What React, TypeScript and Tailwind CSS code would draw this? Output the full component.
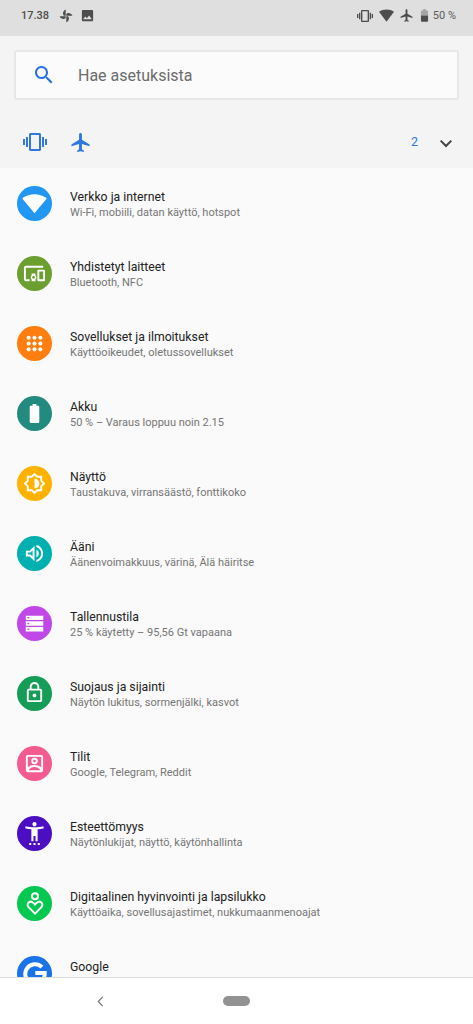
import type { ReactNode } from "react";

type IconProps = {
  className?: string;
  children: ReactNode;
};

type Setting = {
  title: string;
  summary?: string;
  color: string;
  icon: ReactNode;
};

function Icon({ className = "size-[21px]", children }: IconProps) {
  return (
    <svg viewBox="0 0 24 24" fill="currentColor" className={`block shrink-0 ${className}`}>
      {children}
    </svg>
  );
}

function VibrationIcon({ className }: { className: string }) {
  return (
    <Icon className={className}>
      <path d="M0 15h2V9H0v6zm3 2h2V7H3v10zm19-8v6h2V9h-2zm-3 8h2V7h-2v10zM16.5 3h-9C6.67 3 6 3.67 6 4.5v15c0 .83.67 1.5 1.5 1.5h9c.83 0 1.5-.67 1.5-1.5v-15c0-.83-.67-1.5-1.5-1.5zM16 19H8V5h8v14z" />
    </Icon>
  );
}

function FlightIcon({ className }: { className: string }) {
  return (
    <Icon className={className}>
      <path d="M21.5 16v-2l-8-5V3.5c0-.83-.67-1.5-1.5-1.5s-1.5.67-1.5 1.5V9l-8 5v2l8-2.5V19l-2 1.5V22l3.5-1 3.5 1v-1.5l-2-1.5v-5.5l8 2.5z" />
    </Icon>
  );
}

const settings: Setting[] = [
  {
    title: "Verkko ja internet",
    summary: "Wi-Fi, mobiili, datan käyttö, hotspot",
    color: "bg-[#2196f3]",
    icon: (
      <Icon className="size-[25px]">
        <path d="M12 21.4 L.6 7.6 Q.1 6.9.9 6.4 C7.5 1.9 16.5 1.9 23.1 6.4 Q23.9 6.9 23.4 7.6z" />
      </Icon>
    ),
  },
  {
    title: "Yhdistetyt laitteet",
    summary: "Bluetooth, NFC",
    color: "bg-[#6b9f2f]",
    icon: (
      <Icon className="size-[23px]">
        <path d="M3 6h18V4H3c-1.1 0-2 .9-2 2v12c0 1.1.9 2 2 2h4v-2H3V6zm10 6H9v1.78c-.61.55-1 1.33-1 2.22s.39 1.67 1 2.22V20h4v-1.78c.61-.55 1-1.34 1-2.22s-.39-1.67-1-2.22V12zm-2 5.5c-.83 0-1.5-.67-1.5-1.5s.67-1.5 1.5-1.5 1.5.67 1.5 1.5-.67 1.5-1.5 1.5zM22 8h-6c-.5 0-1 .5-1 1v10c0 .5.5 1 1 1h6c.5 0 1-.5 1-1V9c0-.5-.5-1-1-1zm-1 10h-4v-8h4v8z" />
      </Icon>
    ),
  },
  {
    title: "Sovellukset ja ilmoitukset",
    summary: "Käyttöoikeudet, oletussovellukset",
    color: "bg-[#ff7e0f]",
    icon: (
      <Icon>
        <circle cx="5.3" cy="5.3" r="2.3" />
        <circle cx="12" cy="5.3" r="2.3" />
        <circle cx="18.7" cy="5.3" r="2.3" />
        <circle cx="5.3" cy="12" r="2.3" />
        <circle cx="12" cy="12" r="2.3" />
        <circle cx="18.7" cy="12" r="2.3" />
        <circle cx="5.3" cy="18.7" r="2.3" />
        <circle cx="12" cy="18.7" r="2.3" />
        <circle cx="18.7" cy="18.7" r="2.3" />
      </Icon>
    ),
  },
  {
    title: "Akku",
    summary: "50 % – Varaus loppuu noin 2.15",
    color: "bg-[#238a80]",
    icon: (
      <Icon className="size-[23px]">
        <path d="M15.67 4H14V2h-4v2H8.33C7.6 4 7 4.6 7 5.33v15.33C7 21.4 7.6 22 8.33 22h7.33c.74 0 1.34-.6 1.34-1.33V5.33C17 4.6 16.4 4 15.67 4z" />
      </Icon>
    ),
  },
  {
    title: "Näyttö",
    summary: "Taustakuva, virransäästö, fonttikoko",
    color: "bg-[#ffb300]",
    icon: (
      <Icon className="size-[23px]">
        <path
          d="M12 2.2 L14.9 5H19v4.1L21.8 12 19 14.9V19h-4.1L12 21.8 9.1 19H5v-4.1L2.2 12 5 9.1V5h4.1z"
          fill="none"
          stroke="currentColor"
          strokeWidth="2"
        />
        <path d="M12 7v10c2.8 0 5-2.2 5-5s-2.2-5-5-5z" />
      </Icon>
    ),
  },
  {
    title: "Ääni",
    summary: "Äänenvoimakkuus, värinä, Älä häiritse",
    color: "bg-[#00b0b0]",
    icon: (
      <Icon className="size-[23px]">
        <path d="M3 9v6h4l5 5V4L7 9H3zm7-.17v6.34L7.83 13H5v-2h2.83L10 8.83zM16.5 12c0-1.77-1.02-3.29-2.5-4.03v8.05c1.48-.73 2.5-2.25 2.5-4.02zM14 3.23v2.06c2.89.86 5 3.54 5 6.71s-2.11 5.85-5 6.71v2.06c4.01-.91 7-4.49 7-8.77s-2.99-7.86-7-8.77z" />
      </Icon>
    ),
  },
  {
    title: "Tallennustila",
    summary: "25 % käytetty – 95,56 Gt vapaana",
    color: "bg-[#c148e6]",
    icon: (
      <Icon>
        <path d="M2 21h20v-5H2v5zm2-3.4h2v1.8H4v-1.8zM2 3v5h20V3H2zm4 3.4H4V4.6h2v1.8zM2 14.5h20v-5H2v5zm2-3.4h2v1.8H4v-1.8z" />
      </Icon>
    ),
  },
  {
    title: "Suojaus ja sijainti",
    summary: "Näytön lukitus, sormenjälki, kasvot",
    color: "bg-[#159d58]",
    icon: (
      <Icon className="mb-[2px] size-[23px]">
        <path d="M18 8h-1V6c0-2.76-2.24-5-5-5S7 3.24 7 6v2H6c-1.1 0-2 .9-2 2v10c0 1.1.9 2 2 2h12c1.1 0 2-.9 2-2V10c0-1.1-.9-2-2-2zM9 6c0-1.66 1.34-3 3-3s3 1.34 3 3v2H9V6zm9 14H6V10h12v10zm-6-3c1.1 0 2-.9 2-2s-.9-2-2-2-2 .9-2 2 .9 2 2 2z" />
      </Icon>
    ),
  },
  {
    title: "Tilit",
    summary: "Google, Telegram, Reddit",
    color: "bg-[#f45b8e]",
    icon: (
      <Icon className="size-[23px]">
        <path d="M19 3H5c-1.1 0-2 .9-2 2v14c0 1.1.9 2 2 2h14c1.1 0 2-.9 2-2V5c0-1.1-.9-2-2-2zm0 2v11c-1.8-1.5-4.3-2.4-7-2.4S6.8 14.5 5 16V5h14zM5.8 19c1.4-2.2 3.6-3.3 6.2-3.3s4.8 1.1 6.2 3.3H5.8z" />
        <path d="M12 6.1a3.4 3.4 0 1 0 0 6.8 3.4 3.4 0 0 0 0-6.8zm0 2a1.4 1.4 0 1 1 0 2.8 1.4 1.4 0 0 1 0-2.8z" />
      </Icon>
    ),
  },
  {
    title: "Esteettömyys",
    summary: "Näytönlukijat, näyttö, käytönhallinta",
    color: "bg-[#4c0ec2]",
    icon: (
      <Icon className="size-[25px]">
        <path d="M20.5 5c-2.61.7-5.67 1-8.5 1s-5.89-.3-8.5-1L3 7c1.86.5 4 .83 6 1v11.500h2v-5h2v5h2V8c2-.17 4.140-.5 6-1l-.5-2zM12 5c1.1 0 2-.9 2-2s-.9-2-2-2-2 .9-2 2 .9 2 2 2zM6.900 23h2v-2h-2v2zm4.100 0h2v-2h-2v2zm4.100 0h2v-2h-2v2z" />
      </Icon>
    ),
  },
  {
    title: "Digitaalinen hyvinvointi ja lapsilukko",
    summary: "Käyttöaika, sovellusajastimet, nukkumaanmenoajat",
    color: "bg-[#05c850]",
    icon: (
      <Icon className="size-[24px]">
        <g fill="none" stroke="currentColor" strokeWidth="2">
          <circle cx="12" cy="4.2" r="3" />
          <path d="M12 21.6 L5.8 15.4 C2.4 11.9 7.3 7.6 10.4 10.9 L12 12.5 L13.6 10.9 C16.7 7.6 21.6 11.9 18.2 15.4z" />
        </g>
      </Icon>
    ),
  },
  {
    title: "Google",
    color: "bg-[#1a73e8]",
    icon: (
      <Icon className="size-[24px]">
        <path
          d="M18.9 5.1 A9.7 9.7 0 1 0 21.7 12 V11 H12.3"
          fill="none"
          stroke="currentColor"
          strokeWidth="4"
        />
      </Icon>
    ),
  },
];

function StatusBar() {
  return (
    <header className="flex h-9 shrink-0 items-start bg-[#dfdfdf] pl-[21px] pr-[17px] text-[#4d4d4d]">
      <div className="flex h-8 items-center">
        <span className="w-[38px] text-[11px] font-medium">17.38</span>
        <Icon className="mt-[-1px] size-[14px]">
          <path d="M11.500 1v10.500H8.500C5.500 8.500 7 3 11.500 1zM23 11.500H12.500V8.500C15.500 5.500 21 7 23 11.500zM12.500 23V12.500h3C18.500 15.500 17 21 12.500 23zM1 12.500h10.500v3C8.500 18.500 3 17 1 12.500z" />
        </Icon>
        <Icon className="ml-[7px] mt-[-1px] size-[15px]">
          <path d="M21 19V5c0-1.1-.9-2-2-2H5c-1.1 0-2 .9-2 2v14c0 1.1.9 2 2 2h14c1.1 0 2-.9 2-2zM8.5 13.500l2.500 3.010L14.500 12l4.500 6H5l3.500-4.500z" />
        </Icon>
      </div>
      <div className="ml-auto flex h-8 items-center">
        <VibrationIcon className="mt-[-1px] size-4" />
        <Icon className="ml-[6px] mt-[-1px] size-[15px]">
          <path d="M12 22 L0 6 C7 1.2 17 1.2 24 6z" />
        </Icon>
        <FlightIcon className="ml-[5px] mt-[-1px] size-[15px]" />
        <Icon className="ml-[3px] mt-[-1px] size-[15px]">
          <path
            d="M15.7 4H14V1.5h-4V4H8.3C7 4 6.3 4.6 6.3 5.3V12h11.400V5.300C17.700 4.600 17 4 15.700 4z"
            opacity=".4"
          />
          <path d="M6.3 12v8.700c0 .7.600 1.300 1.300 1.300h8.800c.7 0 1.300-.6 1.300-1.300V12z" />
        </Icon>
        <span className="ml-[1px] whitespace-nowrap text-[11px] text-[#5c5c5c]">50 %</span>
      </div>
    </header>
  );
}

function SearchPanel() {
  return (
    <div className="h-[132px] shrink-0 bg-[#f4f4f4] pt-[14px]">
      <div className="mx-[14px] flex h-[50px] items-center rounded-[3px] border-2 border-[#e7e7e7] bg-[#fbfbfb] pl-4">
        <Icon className="size-6 text-[#2472e6]">
          <path d="M15.5 14h-.79l-.28-.27C15.41 12.59 16 11.11 16 9.5 16 5.91 13.09 3 9.5 3S3 5.91 3 9.5 5.91 16 9.5 16c1.61 0 3.09-.59 4.23-1.57l.27.28v.79l5 4.99L20.49 19l-4.99-5zm-6 0C7.01 14 5 11.99 5 9.5S7.01 5 9.5 5 14 7.01 14 9.5 11.99 14 9.5 14z" />
        </Icon>
        <span className="ml-[22px] mt-[2px] text-[16px] text-[#6b6b6b]">Hae asetuksista</span>
      </div>
      <div className="mt-[30px] flex h-6 items-center pl-[23px] pr-[19px] text-[#3077e3]">
        <VibrationIcon className="mt-[-1px] size-6" />
        <FlightIcon className="ml-[22px] size-[23px]" />
        <span className="ml-auto text-[12.5px]">2</span>
        <Icon className="ml-[20px] mt-[2px] size-[16px] text-[#444]">
          <path d="M4 8.500l8 8 8-8" fill="none" stroke="currentColor" strokeWidth="3" />
        </Icon>
      </div>
    </div>
  );
}

function SettingRow({ setting }: { setting: Setting }) {
  return (
    <li className="flex h-[70px] items-start pl-[17px] pt-[18px]">
      <span
        className={`flex size-[35px] shrink-0 items-center justify-center rounded-full text-white ${setting.color}`}
      >
        {setting.icon}
      </span>
      <div className="ml-[18px] whitespace-nowrap pt-[3px]">
        <p className="text-[12.25px] leading-4 text-[#212121]">{setting.title}</p>
        {setting.summary ? (
          <p className="text-[11px] leading-4 text-[#757575]">{setting.summary}</p>
        ) : null}
      </div>
    </li>
  );
}

function NavigationBar() {
  return (
    <nav className="flex h-[47px] shrink-0 items-center border-t border-[#dcdcdc] bg-white">
      <Icon className="ml-[93px] size-[15px] text-[#777]">
        <path d="M15.5 4.5 L8.5 12 L15.5 19.5" fill="none" stroke="currentColor" strokeWidth="2" />
      </Icon>
      <span className="ml-[115px] h-[10px] w-[27px] rounded-full bg-[#929292]" />
    </nav>
  );
}

export default function App() {
  return (
    <div className="flex h-[1024px] w-[473px] flex-col overflow-hidden bg-[#fafafa] font-[Roboto,sans-serif]">
      <StatusBar />
      <SearchPanel />
      <ul className="min-h-0 flex-1 overflow-hidden">
        {settings.map((setting) => (
          <SettingRow key={setting.title} setting={setting} />
        ))}
      </ul>
      <NavigationBar />
    </div>
  );
}
